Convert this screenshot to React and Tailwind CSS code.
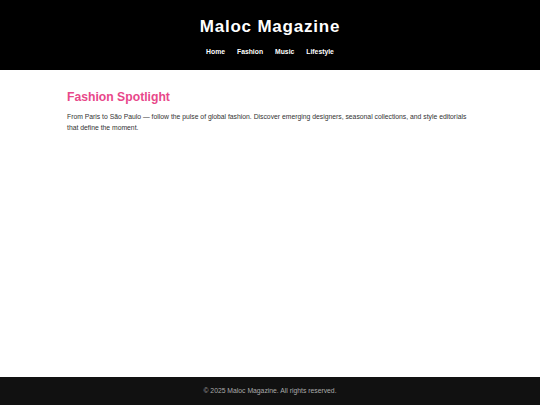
export default function App() {
  return (
    <div
      className="min-h-screen flex flex-col bg-white"
      style={{ fontFamily: '"Liberation Sans", Arial, sans-serif' }}
    >
      <header className="bg-black text-white text-center pt-[16px] pb-[13px]">
        <h1 className="text-[17px] leading-[22px] font-bold tracking-[0.8px]">Maloc Magazine</h1>
        <nav className="mt-[9px] flex justify-center gap-[12px] text-[6.8px] leading-[10px] font-bold">
          <a>Home</a>
          <a>Fashion</a>
          <a>Music</a>
          <a>Lifestyle</a>
        </nav>
      </header>

      <main className="flex-1 w-[406px] mx-auto pt-[19px]">
        <h2 className="text-[12.2px] leading-[16px] font-bold text-[#e8488a]">Fashion Spotlight</h2>
        <p className="mt-[6px] text-[6.8px] leading-[11px] text-[#333]">
          From Paris to São Paulo — follow the pulse of global fashion. Discover emerging designers, seasonal
          collections, and style editorials that define the moment.
        </p>
      </main>

      <footer className="bg-[#111] text-[#aaa] text-center text-[6.8px] leading-[10px] py-[9px] h-[28px]">
        © 2025 Maloc Magazine. All rights reserved.
      </footer>
    </div>
  );
}
